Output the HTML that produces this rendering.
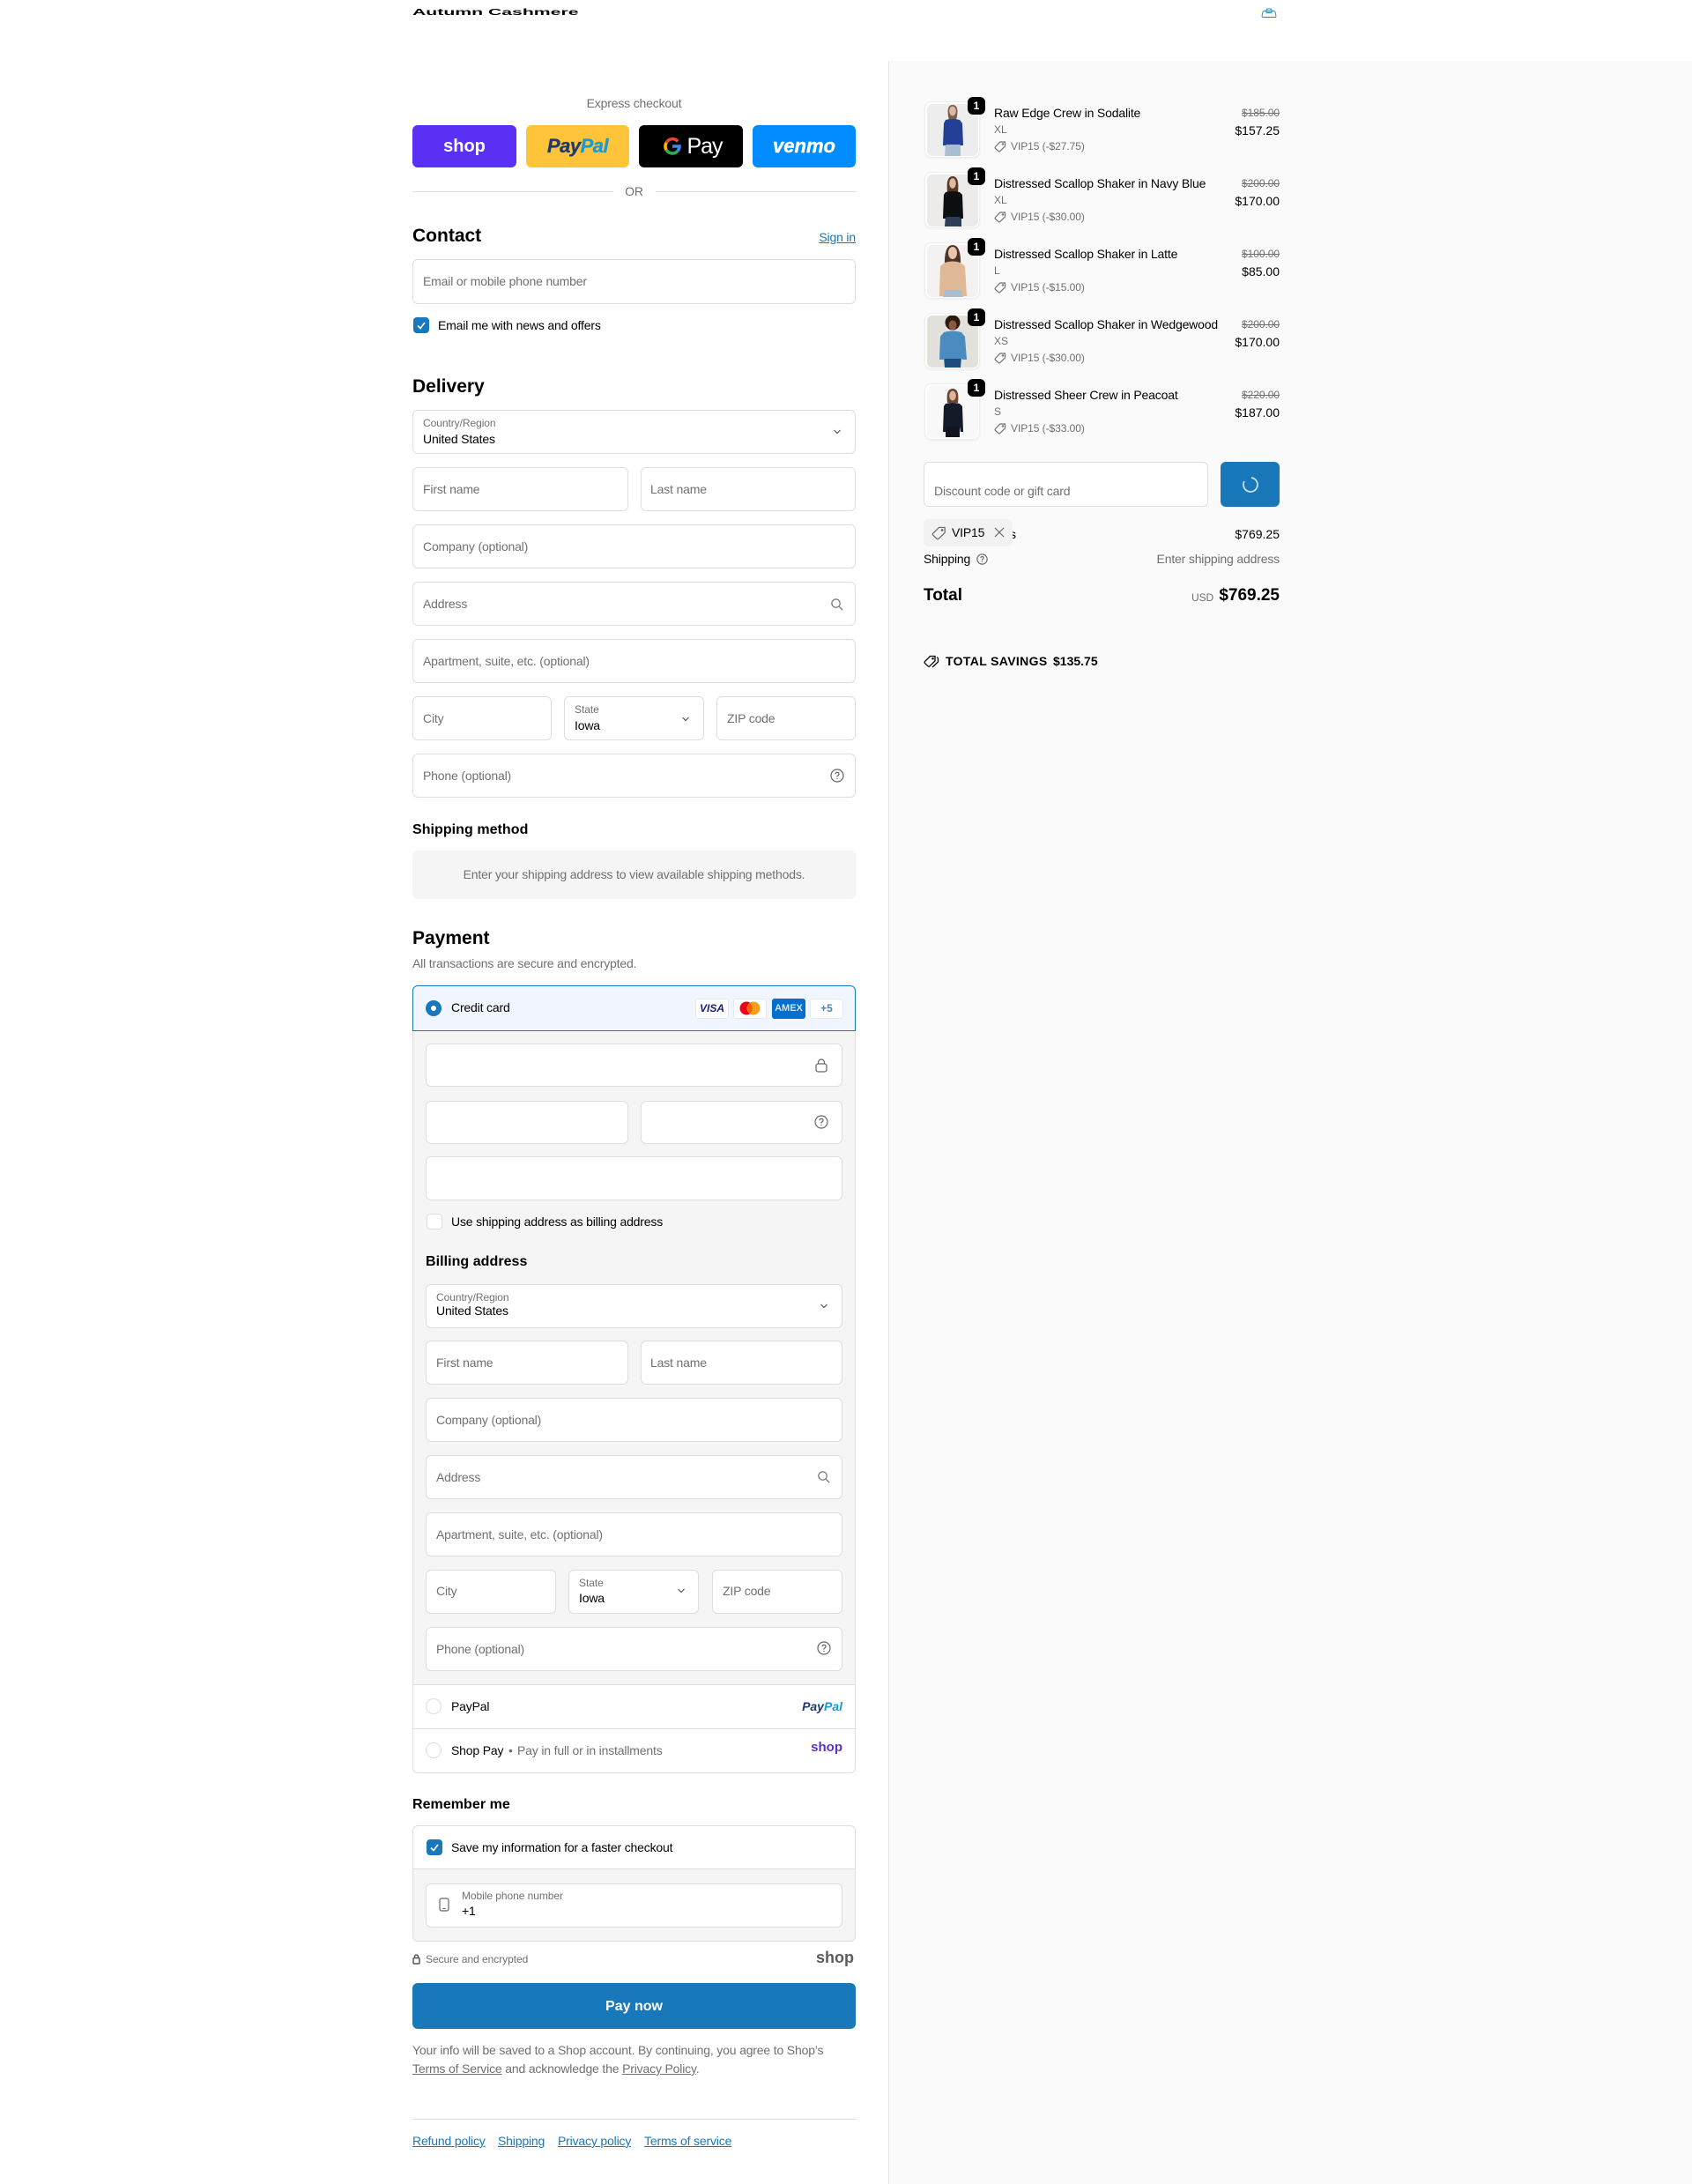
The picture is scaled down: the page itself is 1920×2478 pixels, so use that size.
<!DOCTYPE html>
<html lang="en"><head><meta charset="utf-8"><title>Checkout - Autumn Cashmere</title>
<style>
*{box-sizing:border-box}
html,body{margin:0;padding:0}
body{width:1920px;height:2478px;position:relative;overflow:hidden;background:#fff;font-family:"Liberation Sans",Arial,sans-serif;font-size:14px;color:#000;letter-spacing:-.17px}
.t{position:absolute;white-space:nowrap;line-height:20px;height:20px}
.g{color:#707070}
.s12{font-size:12px;letter-spacing:-.06px}
.b{font-weight:700;letter-spacing:0}
.h2{font-size:21px;font-weight:700;line-height:26px;height:26px;letter-spacing:0}
.h3{font-size:16px;font-weight:700;letter-spacing:.05px}
.r{text-align:right}
.f{position:absolute;border:1px solid #dedede;border-radius:6px;background:#fff;height:50px}
.fill{position:absolute;border-radius:6px}
a{color:#1878b9;text-decoration:underline}
svg{position:absolute;display:block}
.th{position:absolute;left:1049px;width:63px;height:64px;background:#fff;border:1px solid #eee;border-radius:8px;box-shadow:0 1px 2px rgba(0,0,0,.05)}
.bd{position:absolute;left:1098px;width:20px;height:20px;background:#000;color:#fff;border-radius:6px;font-size:12px;font-weight:700;line-height:20px;text-align:center;letter-spacing:0}
.card{position:absolute;top:1133px;width:38px;height:23px;background:#fff;border:1px solid #e6eaf0;border-radius:3px;letter-spacing:0}
.radio{position:absolute;width:18px;height:18px;border-radius:50%;border:1px solid #dedede;background:#fff}
.chk{position:absolute;width:18px;height:18px;border-radius:4px;background:#1878b9}
.ex{position:absolute;top:142px;height:48px;border-radius:6px;text-align:center;line-height:48px;letter-spacing:0}
</style></head><body>

<!-- header -->
<div class="t b" style="left:468px;top:5px;font-size:10px;transform:scaleX(2.12);transform-origin:0 50%">Autumn Cashmere</div>
<svg style="left:1431px;top:9px" width="18" height="11" viewBox="0 0 18 11" fill="none" stroke="#2f84ab" stroke-width=".9"><path d="M1 9 2 4.5Q2.4 3.5 3.5 3.5H14.5Q15.6 3.5 16 4.5L17 9Q17 10.5 15.8 10.5H2.2Q1 10.5 1 9Z"/><path d="M6 5.5V2.2Q6 1 7.3 1H10.7Q12 1 12 2.2V5.5H6Z"/></svg>

<!-- right panel -->
<div style="position:absolute;left:1008px;top:69px;width:912px;height:2409px;background:#fafafa;border-left:1px solid #e6e6e6"></div>

<!-- express -->
<div class="t g" style="left:468px;width:503px;top:107px;text-align:center">Express checkout</div>
<div class="ex" style="left:468px;width:118px;background:#5a31f4;color:#fff;font-weight:700;font-size:20px">shop</div>
<div class="ex" style="left:597px;width:117px;background:#ffc439;font-weight:700;font-style:italic;font-size:22px;letter-spacing:-.5px;-webkit-text-stroke:.3px"><span style="color:#1f3a6e">Pay</span><span style="color:#179bd7">Pal</span></div>
<div class="ex" style="left:725px;width:118px;background:#000;color:#fff;font-size:25px;padding-left:31px;letter-spacing:-1px">Pay</div>
<svg style="left:753px;top:156px" width="20" height="20" viewBox="0 0 20 20" fill="none" stroke-width="3.6"><path d="M16.2 4.4A8 8 0 0 0 3.1 6" stroke="#ea4335"/><path d="M3.1 6A8 8 0 0 0 3.1 14" stroke="#fbbc04"/><path d="M3.1 14A8 8 0 0 0 16 15.3" stroke="#34a853"/><path d="M16 15.3A8 8 0 0 0 18 10H10" stroke="#4285f4"/></svg>
<div class="ex" style="left:854px;width:117px;background:#008cff;color:#fff;font-weight:700;font-style:italic;font-size:22px;-webkit-text-stroke:.4px #fff">venmo</div>

<div style="position:absolute;left:468px;top:217px;width:228px;height:1px;background:#dedede"></div>
<div style="position:absolute;left:744px;top:217px;width:227px;height:1px;background:#dedede"></div>
<div class="t g" style="left:468px;width:503px;top:207px;text-align:center">OR</div>

<!-- contact -->
<div class="t h2" style="left:468px;top:255px">Contact</div>
<div class="t r" style="right:949px;top:259px"><a>Sign in</a></div>
<div class="f" style="left:468px;top:294px;width:503px;height:51px"></div>
<div class="t g" style="left:480px;top:309px">Email or mobile phone number</div>
<div class="chk" style="left:469px;top:360px"></div>
<svg style="left:469px;top:360px" width="18" height="18" viewBox="0 0 18 18" fill="none" stroke="#fff" stroke-width="1.6"><path d="M5 9.5 8 12.5 13 6"/></svg>
<div class="t" style="left:497px;top:359px">Email me with news and offers</div>

<!-- delivery -->
<div class="t h2" style="left:468px;top:426px">Delivery</div>
<div class="f" style="left:468px;top:465px;width:503px"></div>
<div class="t g s12" style="left:480px;top:470px">Country/Region</div>
<div class="t" style="left:480px;top:488px">United States</div>
<svg style="left:943px;top:485px" width="14" height="10" viewBox="0 0 14 10" fill="none" stroke="#555" stroke-width="1.2"><path d="M3.5 3 7 6.5 10.5 3"/></svg>

<div class="f" style="left:468px;top:530px;width:245px"></div>
<div class="t g" style="left:480px;top:545px">First name</div>
<div class="f" style="left:727px;top:530px;width:244px"></div>
<div class="t g" style="left:738px;top:545px">Last name</div>

<div class="f" style="left:468px;top:595px;width:503px"></div>
<div class="t g" style="left:480px;top:610px">Company (optional)</div>

<div class="f" style="left:468px;top:660px;width:503px"></div>
<div class="t g" style="left:480px;top:675px">Address</div>
<svg style="left:942px;top:678px" width="15" height="15" viewBox="0 0 16 16" fill="none" stroke="#707070" stroke-width="1.3"><circle cx="7" cy="7" r="5"/><path d="M11 11 15 15"/></svg>

<div class="f" style="left:468px;top:725px;width:503px"></div>
<div class="t g" style="left:480px;top:740px">Apartment, suite, etc. (optional)</div>

<div class="f" style="left:468px;top:790px;width:158px"></div>
<div class="t g" style="left:480px;top:805px">City</div>
<div class="f" style="left:640px;top:790px;width:159px"></div>
<div class="t g s12" style="left:652px;top:795px">State</div>
<div class="t" style="left:652px;top:813px">Iowa</div>
<svg style="left:771px;top:811px" width="14" height="10" viewBox="0 0 14 10" fill="none" stroke="#555" stroke-width="1.2"><path d="M3.5 3 7 6.5 10.5 3"/></svg>
<div class="f" style="left:813px;top:790px;width:158px"></div>
<div class="t g" style="left:825px;top:805px">ZIP code</div>

<div class="f" style="left:468px;top:855px;width:503px"></div>
<div class="t g" style="left:480px;top:870px">Phone (optional)</div>
<svg style="left:942px;top:872px" width="16" height="16" viewBox="0 0 16 16" fill="none" stroke="#666" stroke-width="1.2"><circle cx="8" cy="8" r="7"/><path d="M6 6.3Q6 4.4 8 4.4T10 6.2Q10 7.4 8 8.4V9.5M8 11V12"/></svg>

<div class="t h3" style="left:468px;top:932px">Shipping method</div>
<div class="fill" style="left:468px;top:965px;width:503px;height:55px;background:#f5f5f5"></div>
<div class="t g" style="left:468px;width:503px;top:982px;text-align:center">Enter your shipping address to view available shipping methods.</div>

<!-- payment -->
<div class="t h2" style="left:468px;top:1052px">Payment</div>
<div class="t g" style="left:468px;top:1083px">All transactions are secure and encrypted.</div>

<div style="position:absolute;left:468px;top:1168px;width:503px;height:744px;background:#f5f5f5;border-left:1px solid #dedede;border-right:1px solid #dedede"></div>
<div style="position:absolute;left:468px;top:1118px;width:503px;height:52px;background:#f0f5ff;border:1px solid #1878b9;border-radius:6px 6px 0 0"></div>
<div class="radio" style="left:483px;top:1135px;border:6px solid #1878b9"></div>
<div class="t" style="left:512px;top:1133px">Credit card</div>
<div class="card" style="left:789px;text-align:center;line-height:21px;font-weight:700;font-style:italic;font-size:12px;color:#1a1f71">VISA</div>
<div class="card" style="left:832px"></div>
<svg style="left:839px;top:1136px" width="24" height="16" viewBox="0 0 24 16"><circle cx="8" cy="8" r="7.5" fill="#eb001b"/><circle cx="16" cy="8" r="7.5" fill="#f79e1b"/><path d="M12 2A7.5 7.5 0 0 1 12 14 7.5 7.5 0 0 1 12 2Z" fill="#ff5f00"/></svg>
<div class="card" style="left:876px;background:#016fd0;border-color:#016fd0;color:#cfe4f7;text-align:center;line-height:21px;font-size:11px;font-weight:700">AMEX</div>
<div class="card" style="left:919px;text-align:center;line-height:21px;font-size:12px;font-weight:700;color:#4a86ad">+5</div>

<div class="f" style="left:483px;top:1184px;width:473px;height:49px"></div>
<svg style="left:925px;top:1201px" width="14" height="16" viewBox="0 0 14 16" fill="none" stroke="#666" stroke-width="1.2"><rect x="1" y="6" width="12" height="9" rx="2.5"/><path d="M3.5 6V4.5a3.5 3.5 0 0 1 7 0V6"/></svg>
<div class="f" style="left:483px;top:1249px;width:230px;height:49px"></div>
<div class="f" style="left:727px;top:1249px;width:229px;height:49px"></div>
<svg style="left:924px;top:1265px" width="16" height="16" viewBox="0 0 16 16" fill="none" stroke="#666" stroke-width="1.2"><circle cx="8" cy="8" r="7"/><path d="M6 6.3Q6 4.4 8 4.4T10 6.2Q10 7.4 8 8.4V9.5M8 11V12"/></svg>
<div class="f" style="left:483px;top:1312px;width:473px;height:50px"></div>
<div style="position:absolute;left:484px;top:1377px;width:18px;height:18px;background:#fff;border:1px solid #dedede;border-radius:4px"></div>
<div class="t" style="left:512px;top:1376px">Use shipping address as billing address</div>

<div class="t h3" style="left:483px;top:1422px">Billing address</div>
<div class="f" style="left:483px;top:1457px;width:473px"></div>
<div class="t g s12" style="left:495px;top:1462px">Country/Region</div>
<div class="t" style="left:495px;top:1477px">United States</div>
<svg style="left:928px;top:1477px" width="14" height="10" viewBox="0 0 14 10" fill="none" stroke="#555" stroke-width="1.2"><path d="M3.5 3 7 6.5 10.5 3"/></svg>

<div class="f" style="left:483px;top:1521px;width:230px"></div>
<div class="t g" style="left:495px;top:1536px">First name</div>
<div class="f" style="left:727px;top:1521px;width:229px"></div>
<div class="t g" style="left:738px;top:1536px">Last name</div>

<div class="f" style="left:483px;top:1586px;width:473px"></div>
<div class="t g" style="left:495px;top:1601px">Company (optional)</div>

<div class="f" style="left:483px;top:1651px;width:473px"></div>
<div class="t g" style="left:495px;top:1666px">Address</div>
<svg style="left:927px;top:1668px" width="15" height="15" viewBox="0 0 16 16" fill="none" stroke="#707070" stroke-width="1.3"><circle cx="7" cy="7" r="5"/><path d="M11 11 15 15"/></svg>

<div class="f" style="left:483px;top:1716px;width:473px"></div>
<div class="t g" style="left:495px;top:1731px">Apartment, suite, etc. (optional)</div>

<div class="f" style="left:483px;top:1781px;width:148px"></div>
<div class="t g" style="left:495px;top:1795px">City</div>
<div class="f" style="left:645px;top:1781px;width:148px"></div>
<div class="t g s12" style="left:657px;top:1786px">State</div>
<div class="t" style="left:657px;top:1803px">Iowa</div>
<svg style="left:766px;top:1800px" width="14" height="10" viewBox="0 0 14 10" fill="none" stroke="#555" stroke-width="1.2"><path d="M3.5 3 7 6.5 10.5 3"/></svg>
<div class="f" style="left:808px;top:1781px;width:148px"></div>
<div class="t g" style="left:820px;top:1795px">ZIP code</div>

<div class="f" style="left:483px;top:1846px;width:473px"></div>
<div class="t g" style="left:495px;top:1861px">Phone (optional)</div>
<svg style="left:927px;top:1862px" width="16" height="16" viewBox="0 0 16 16" fill="none" stroke="#666" stroke-width="1.2"><circle cx="8" cy="8" r="7"/><path d="M6 6.3Q6 4.4 8 4.4T10 6.2Q10 7.4 8 8.4V9.5M8 11V12"/></svg>

<div style="position:absolute;left:468px;top:1911px;width:503px;height:101px;background:#fff;border:1px solid #dedede;border-radius:0 0 6px 6px"></div>
<div style="position:absolute;left:468px;top:1961px;width:503px;height:1px;background:#dedede"></div>
<div class="radio" style="left:483px;top:1927px"></div>
<div class="t" style="left:512px;top:1926px">PayPal</div>
<div class="t b" style="right:964px;top:1926px;font-style:italic;font-size:14px"><span style="color:#1f3a6e">Pay</span><span style="color:#179bd7">Pal</span></div>
<div class="radio" style="left:483px;top:1977px"></div>
<div class="t" style="left:512px;top:1976px">Shop Pay</div>
<div class="t g" style="left:577px;top:1976px">•</div>
<div class="t g" style="left:587px;top:1976px">Pay in full or in installments</div>
<div class="t b" style="right:964px;top:1973px;color:#5a31c4;font-size:15px">shop</div>

<div class="t h3" style="left:468px;top:2038px">Remember me</div>
<div style="position:absolute;left:468px;top:2071px;width:503px;height:132px;background:#f5f5f5;border:1px solid #dedede;border-radius:6px"></div>
<div style="position:absolute;left:469px;top:2072px;width:501px;height:49px;background:#fff;border-bottom:1px solid #dedede;border-radius:6px 6px 0 0"></div>
<div class="chk" style="left:484px;top:2087px"></div>
<svg style="left:484px;top:2087px" width="18" height="18" viewBox="0 0 18 18" fill="none" stroke="#fff" stroke-width="1.6"><path d="M5 9.5 8 12.5 13 6"/></svg>
<div class="t" style="left:512px;top:2086px">Save my information for a faster checkout</div>
<div class="f" style="left:483px;top:2137px;width:473px;height:50px"></div>
<svg style="left:498px;top:2153px" width="12" height="16" viewBox="0 0 12 16" fill="none" stroke="#666" stroke-width="1.2"><rect x="1" y="1" width="10" height="14" rx="2"/><path d="M4.5 12.5H7.5"/></svg>
<div class="t g s12" style="left:524px;top:2141px">Mobile phone number</div>
<div class="t" style="left:524px;top:2158px">+1</div>

<svg style="left:468px;top:2217px" width="9" height="12" viewBox="0 0 9 12" fill="none" stroke="#555" stroke-width="1.5"><rect x="1" y="4.5" width="7" height="6.5" rx="1"/><path d="M2.5 4.5V3a2 2 0 0 1 4 0v1.5"/></svg>
<div class="t g s12" style="left:483px;top:2213px">Secure and encrypted</div>
<div class="t b" style="right:951px;top:2211px;color:#5c5c5c;font-size:18px">shop</div>

<div class="fill" style="left:468px;top:2250px;width:503px;height:52px;background:#1878b9"></div>
<div class="t b" style="left:468px;width:503px;top:2267px;text-align:center;color:#fff;font-size:16px">Pay now</div>

<div class="t g" style="left:468px;top:2316px">Your info will be saved to a Shop account. By continuing, you agree to Shop’s</div>
<div class="t g" style="left:468px;top:2337px"><u>Terms of Service</u> and acknowledge the <u>Privacy Policy</u>.</div>

<div style="position:absolute;left:468px;top:2404px;width:504px;height:1px;background:#dedede"></div>
<div class="t" style="left:468px;top:2419px"><a>Refund policy</a></div>
<div class="t" style="left:565px;top:2419px"><a>Shipping</a></div>
<div class="t" style="left:633px;top:2419px"><a>Privacy policy</a></div>
<div class="t" style="left:731px;top:2419px"><a>Terms of service</a></div>

<!-- line items -->
<div class="th" style="top:115px"></div>
<svg style="left:1052px;top:118px;border-radius:6px" width="58" height="59" viewBox="0 0 58 59"><rect width="58" height="59" fill="#eeeded"/><path d="M20 59 21 44H38L38 59Z" fill="#a9bed0"/><path d="M24 14Q22 1 29 1 36 1 34 14L33 19H25Z" fill="#7a5f4c"/><ellipse cx="29" cy="8" rx="3.8" ry="5.5" fill="#dcb8a2"/><path d="M21 18Q29 16 37 18L40 22 41 47H38L37 46H22L21 47H18L19 22Z" fill="#233f96"/></svg>
<div class="bd" style="top:110px">1</div>
<div class="t" style="left:1128px;top:118px">Raw Edge Crew in Sodalite</div>
<div class="t g s12" style="left:1128px;top:137px">XL</div>
<svg style="left:1128px;top:159px" width="14" height="14" viewBox="0 0 14 14" fill="none" stroke="#707070" stroke-width="1.2"><path d="M1.5 7.5 7 2H12.5V7L6.8 12.4Q5.8 13.3 4.8 12.4L1.5 9.3Q.7 8.4 1.5 7.5Z"/><circle cx="10" cy="4.5" r=".6" fill="#707070"/></svg>
<div class="t g s12" style="left:1147px;top:156px">VIP15 (-$27.75)</div>
<div class="t g s12 r" style="right:468px;top:118px;text-decoration:line-through">$185.00</div>
<div class="t r" style="right:468px;top:138px;letter-spacing:0">$157.25</div>

<div class="th" style="top:195px"></div>
<svg style="left:1052px;top:198px;border-radius:6px" width="58" height="59" viewBox="0 0 58 59"><rect width="58" height="59" fill="#edebe9"/><path d="M20 59 21 46H39L39 59Z" fill="#2c3d57"/><path d="M23 20Q21 2 29 2 37 2 35 20Z" fill="#5a3826"/><ellipse cx="29" cy="10" rx="3.8" ry="5.8" fill="#dfbaa2"/><path d="M21 20Q29 18 37 20L40 23 41 50H38L37 48H22L21 50H18L19 23Z" fill="#0d0e12"/></svg>
<div class="bd" style="top:190px">1</div>
<div class="t" style="left:1128px;top:198px">Distressed Scallop Shaker in Navy Blue</div>
<div class="t g s12" style="left:1128px;top:217px">XL</div>
<svg style="left:1128px;top:239px" width="14" height="14" viewBox="0 0 14 14" fill="none" stroke="#707070" stroke-width="1.2"><path d="M1.5 7.5 7 2H12.5V7L6.8 12.4Q5.8 13.3 4.8 12.4L1.5 9.3Q.7 8.4 1.5 7.5Z"/><circle cx="10" cy="4.5" r=".6" fill="#707070"/></svg>
<div class="t g s12" style="left:1147px;top:236px">VIP15 (-$30.00)</div>
<div class="t g s12 r" style="right:468px;top:198px;text-decoration:line-through">$200.00</div>
<div class="t r" style="right:468px;top:218px;letter-spacing:0">$170.00</div>

<div class="th" style="top:275px"></div>
<svg style="left:1052px;top:278px;border-radius:6px" width="58" height="59" viewBox="0 0 58 59"><rect width="58" height="59" fill="#f3f2f1"/><path d="M18 59 19 49H40L41 59Z" fill="#a9bdd0"/><path d="M20 24Q19 0 29 0 39 0 38 24Z" fill="#4f3325"/><ellipse cx="29" cy="9" rx="5" ry="7" fill="#e6c4ae"/><path d="M20 20Q29 17 38 20L43 24 45 58H40L39 51H20L19 58H14L15 24Z" fill="#dfb896"/></svg>
<div class="bd" style="top:270px">1</div>
<div class="t" style="left:1128px;top:278px">Distressed Scallop Shaker in Latte</div>
<div class="t g s12" style="left:1128px;top:297px">L</div>
<svg style="left:1128px;top:319px" width="14" height="14" viewBox="0 0 14 14" fill="none" stroke="#707070" stroke-width="1.2"><path d="M1.5 7.5 7 2H12.5V7L6.8 12.4Q5.8 13.3 4.8 12.4L1.5 9.3Q.7 8.4 1.5 7.5Z"/><circle cx="10" cy="4.5" r=".6" fill="#707070"/></svg>
<div class="t g s12" style="left:1147px;top:316px">VIP15 (-$15.00)</div>
<div class="t g s12 r" style="right:468px;top:278px;text-decoration:line-through">$100.00</div>
<div class="t r" style="right:468px;top:298px;letter-spacing:0">$85.00</div>

<div class="th" style="top:355px"></div>
<svg style="left:1052px;top:358px;border-radius:6px" width="58" height="59" viewBox="0 0 58 59"><rect width="58" height="59" fill="#e3e1dc"/><path d="M20 59 19 47H39L38 59Z" fill="#1d4c7d"/><circle cx="29" cy="8" r="8.5" fill="#2b1a12"/><ellipse cx="29" cy="11" rx="4.5" ry="5.5" fill="#8a5a3e"/><path d="M19 19Q29 16 39 19L43 24 45 50H41L39 49H20L18 50H14L15 24Z" fill="#4b8bbf"/></svg>
<div class="bd" style="top:350px">1</div>
<div class="t" style="left:1128px;top:358px">Distressed Scallop Shaker in Wedgewood</div>
<div class="t g s12" style="left:1128px;top:377px">XS</div>
<svg style="left:1128px;top:399px" width="14" height="14" viewBox="0 0 14 14" fill="none" stroke="#707070" stroke-width="1.2"><path d="M1.5 7.5 7 2H12.5V7L6.8 12.4Q5.8 13.3 4.8 12.4L1.5 9.3Q.7 8.4 1.5 7.5Z"/><circle cx="10" cy="4.5" r=".6" fill="#707070"/></svg>
<div class="t g s12" style="left:1147px;top:396px">VIP15 (-$30.00)</div>
<div class="t g s12 r" style="right:468px;top:358px;text-decoration:line-through">$200.00</div>
<div class="t r" style="right:468px;top:378px;letter-spacing:0">$170.00</div>

<div class="th" style="top:435px"></div>
<svg style="left:1052px;top:438px;border-radius:6px" width="58" height="59" viewBox="0 0 58 59"><rect width="58" height="59" fill="#f8f8f8"/><path d="M21 58 21 44H37L37 58Z" fill="#12151f"/><path d="M23 19Q21 3 29 3 37 3 35 19Z" fill="#6a4630"/><ellipse cx="29" cy="11" rx="3.8" ry="5.5" fill="#dcb59c"/><path d="M21 20Q29 18 37 20L40 23 41 52H38L37 46H22L21 52H18L19 23Z" fill="#151a2b"/></svg>
<div class="bd" style="top:430px">1</div>
<div class="t" style="left:1128px;top:438px">Distressed Sheer Crew in Peacoat</div>
<div class="t g s12" style="left:1128px;top:457px">S</div>
<svg style="left:1128px;top:479px" width="14" height="14" viewBox="0 0 14 14" fill="none" stroke="#707070" stroke-width="1.2"><path d="M1.5 7.5 7 2H12.5V7L6.8 12.4Q5.8 13.3 4.8 12.4L1.5 9.3Q.7 8.4 1.5 7.5Z"/><circle cx="10" cy="4.5" r=".6" fill="#707070"/></svg>
<div class="t g s12" style="left:1147px;top:476px">VIP15 (-$33.00)</div>
<div class="t g s12 r" style="right:468px;top:438px;text-decoration:line-through">$220.00</div>
<div class="t r" style="right:468px;top:458px;letter-spacing:0">$187.00</div>

<!-- discount -->
<div class="f" style="left:1048px;top:524px;width:323px;height:51px"></div>
<div class="t g" style="left:1060px;top:547px">Discount code or gift card</div>
<div class="fill" style="left:1385px;top:524px;width:67px;height:51px;background:#1878b9"></div>
<svg style="left:1409px;top:540px" width="20" height="20" viewBox="0 0 20 20" fill="none" stroke-width="1.7"><path d="M11 2A8 8 0 1 1 3 6" stroke="#cfe3f1"/></svg>

<!-- summary -->
<div class="t" style="left:1146px;top:596px;font-size:14px">s</div>
<div class="fill" style="left:1048px;top:589px;width:101px;height:31px;background:#f2f2f2"></div>
<svg style="left:1057px;top:596px" width="17" height="17" viewBox="0 0 14 14" fill="none" stroke="#666" stroke-width="1"><path d="M1.5 7.5 7 2H12.5V7L6.8 12.4Q5.8 13.3 4.8 12.4L1.5 9.3Q.7 8.4 1.5 7.5Z"/><circle cx="10" cy="4.5" r=".6" fill="#666"/></svg>
<div class="t" style="left:1080px;top:594px">VIP15</div>
<svg style="left:1128px;top:598px" width="12" height="12" viewBox="0 0 12 12" fill="none" stroke="#666" stroke-width="1.2"><path d="M1 1 11 11M11 1 1 11"/></svg>
<div class="t r" style="right:468px;top:596px;letter-spacing:0">$769.25</div>
<div class="t" style="left:1048px;top:624px">Shipping</div>
<svg style="left:1108px;top:628px" width="13" height="13" viewBox="0 0 16 16" fill="none" stroke="#666" stroke-width="1.4"><circle cx="8" cy="8" r="7"/><path d="M6 6.3Q6 4.4 8 4.4T10 6.2Q10 7.4 8 8.4V9.5M8 11V12"/></svg>
<div class="t g r" style="right:468px;top:624px">Enter shipping address</div>
<div class="t b" style="left:1048px;top:666px;font-size:19px">Total</div>
<div class="t g s12" style="left:1352px;top:668px">USD</div>
<div class="t b r" style="right:468px;top:666px;font-size:19px">$769.25</div>
<svg style="left:1048px;top:742px" width="18" height="16" viewBox="0 0 18 16" fill="none" stroke="#000" stroke-width="1.3"><path d="M1.5 8.5 7.5 2.5H13V8L7 13.8Q6 14.7 5 13.8L1.5 10.5Q.7 9.5 1.5 8.5Z"/><path d="M15.2 3.5 16.5 5V9L10 15"/><circle cx="10.5" cy="5.2" r=".6" fill="#000"/></svg>
<div class="t b" style="left:1073px;top:740px;letter-spacing:.35px">TOTAL SAVINGS</div>
<div class="t b" style="left:1195px;top:740px">$135.75</div>

</body></html>
